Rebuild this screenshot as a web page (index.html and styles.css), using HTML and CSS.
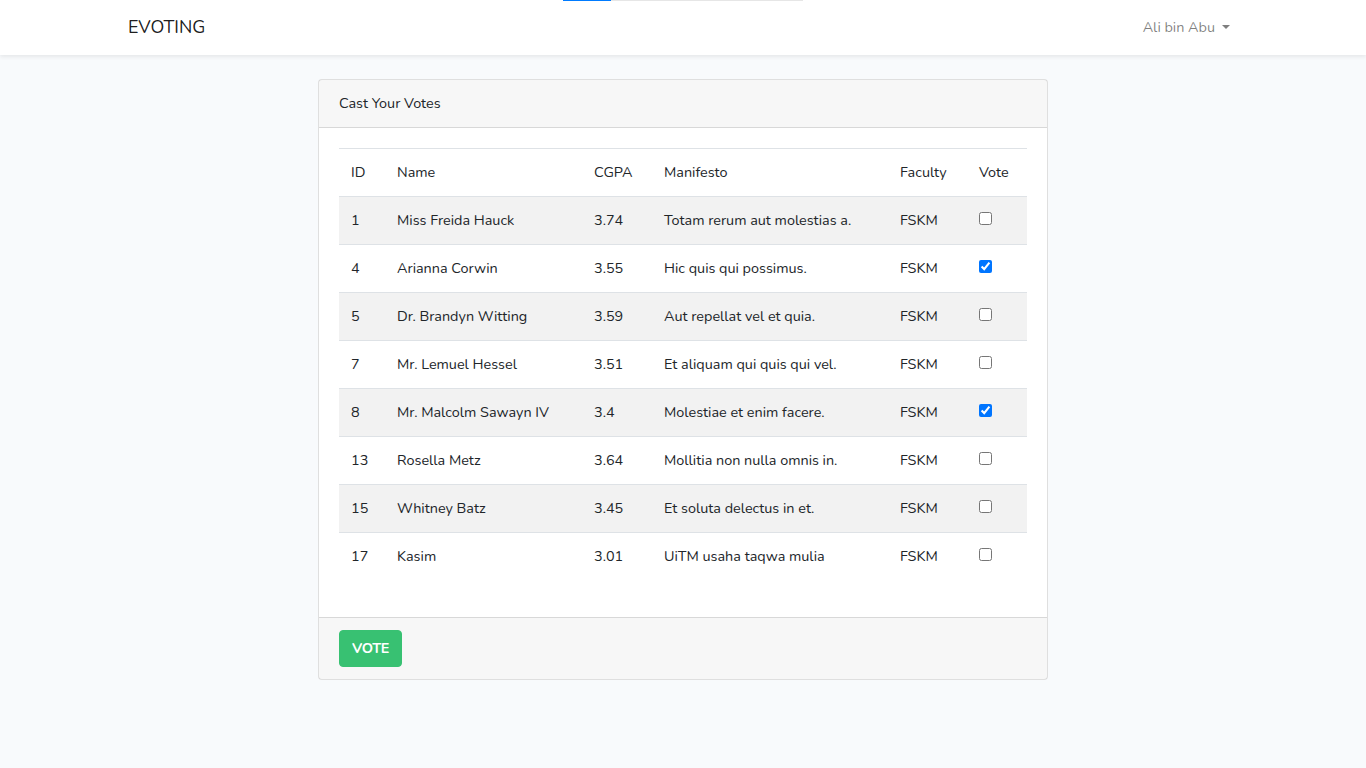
FILE: index.html
```
<!DOCTYPE html>
<html lang="en">
<head>
<meta charset="utf-8">
<title>EVOTING</title>
<link rel="stylesheet" href="styles.css">
</head>
<body>
<div class="progress-top"><div class="progress-fill"></div></div>
<nav class="navbar">
  <div class="container nav-inner">
    <a class="brand" href="#">EVOTING</a>
    <a class="user" href="#">Ali bin Abu <span class="caret"></span></a>
  </div>
</nav>
<main class="main">
  <div class="card">
    <div class="card-header">Cast Your Votes</div>
    <div class="card-body">
      <table class="table">
        <colgroup>
          <col class="c-id"><col class="c-name"><col class="c-cgpa"><col class="c-man"><col class="c-fac"><col class="c-vote">
        </colgroup>
        <thead>
          <tr><td>ID</td><td>Name</td><td>CGPA</td><td>Manifesto</td><td>Faculty</td><td>Vote</td></tr>
        </thead>
        <tbody>
          <tr class="odd"><td>1</td><td>Miss Freida Hauck</td><td>3.74</td><td>Totam rerum aut molestias a.</td><td>FSKM</td><td><input type="checkbox"></td></tr>
          <tr><td>4</td><td>Arianna Corwin</td><td>3.55</td><td>Hic quis qui possimus.</td><td>FSKM</td><td><input type="checkbox" checked></td></tr>
          <tr class="odd"><td>5</td><td>Dr. Brandyn Witting</td><td>3.59</td><td>Aut repellat vel et quia.</td><td>FSKM</td><td><input type="checkbox"></td></tr>
          <tr><td>7</td><td>Mr. Lemuel Hessel</td><td>3.51</td><td>Et aliquam qui quis qui vel.</td><td>FSKM</td><td><input type="checkbox"></td></tr>
          <tr class="odd"><td>8</td><td>Mr. Malcolm Sawayn IV</td><td>3.4</td><td>Molestiae et enim facere.</td><td>FSKM</td><td><input type="checkbox" checked></td></tr>
          <tr><td>13</td><td>Rosella Metz</td><td>3.64</td><td>Mollitia non nulla omnis in.</td><td>FSKM</td><td><input type="checkbox"></td></tr>
          <tr class="odd"><td>15</td><td>Whitney Batz</td><td>3.45</td><td>Et soluta delectus in et.</td><td>FSKM</td><td><input type="checkbox"></td></tr>
          <tr><td>17</td><td>Kasim</td><td>3.01</td><td>UiTM usaha taqwa mulia</td><td>FSKM</td><td><input type="checkbox"></td></tr>
        </tbody>
      </table>
    </div>
    <div class="card-footer"><button class="btn" type="button">VOTE</button></div>
  </div>
</main>
</body>
</html>
```
FILE: styles.css
```
* { box-sizing: border-box; }
html, body { margin: 0; }
body {
  background: #f8fafc;
  font-family: Nunito, "Open Sans", "DejaVu Sans", sans-serif;
  font-size: 14.4px;
  line-height: 1.6;
  color: #212529;
}
.progress-top {
  position: absolute;
  top: 0;
  left: 563px;
  width: 240px;
  height: 1px;
  background: #e6e6e6;
  z-index: 10;
}
.progress-fill { width: 48px; height: 1px; background: #007bff; }
.navbar {
  background: #fff;
  box-shadow: 0 2px 4px rgba(0,0,0,.075);
  padding: 8px 0;
}
.container { width: 1140px; margin: 0 auto; padding: 0 15px; }
.nav-inner { display: flex; justify-content: space-between; align-items: center; }
.brand {
  font-size: 18px;
  line-height: 28.8px;
  padding: 5px 0;
  color: rgba(0,0,0,.9);
  text-decoration: none;
}
.user {
  color: rgba(0,0,0,.5);
  text-decoration: none;
  padding: 8px;
  display: flex;
  align-items: center;
}
.caret {
  display: inline-block;
  margin-left: 7px;
  width: 0; height: 0;
  border-top: 4.3px solid rgba(0,0,0,.5);
  border-left: 4.3px solid transparent;
  border-right: 4.3px solid transparent;
  position: relative;
  top: -1px;
}
.main { padding: 24px 0; display: flex; justify-content: center; }
.card {
  width: 730px;
  background: #fff;
  border: 1px solid rgba(0,0,0,.125);
  border-radius: 4px;
}
.card-header {
  padding: 12px 20px;
  background: rgba(0,0,0,.03);
  border-bottom: 1px solid rgba(0,0,0,.125);
}
.card-body { padding: 20px; }
.table { width: 100%; border-collapse: collapse; margin-bottom: 16px; table-layout: fixed; }
.table td { padding: 12px; border-top: 1px solid #dee2e6; vertical-align: top; line-height: 23px; height: 48px; }
.table tr.odd { background: rgba(0,0,0,.05); }
.c-id { width: 46px; }
.c-name { width: 197px; }
.c-cgpa { width: 70px; }
.c-man { width: 236px; }
.c-fac { width: 79px; }
.c-vote { width: 60px; }
.table input { margin: 3px 0 0 0; width: 13px; height: 13px; vertical-align: top; }
.card-footer {
  padding: 12px 20px;
  background: rgba(0,0,0,.03);
  border-top: 1px solid rgba(0,0,0,.125);
}
.btn {
  font-family: inherit;
  font-size: 14.4px;
  line-height: 23px;
  font-weight: 700;
  color: #fff;
  background: #38c172;
  border: 1px solid #38c172;
  border-radius: 4px;
  padding: 6px 12px;
  letter-spacing: -0.25px;
}
```
